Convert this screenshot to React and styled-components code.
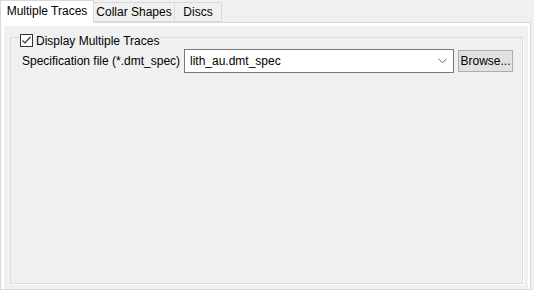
import styled, { createGlobalStyle } from 'styled-components';

const GlobalStyle = createGlobalStyle`
  html, body {
    margin: 0;
    padding: 0;
    background: #f0f0f0;
  }
  body {
    font-family: "Liberation Sans", Arial, sans-serif;
    font-size: 12px;
    color: #000;
  }
`;

const Window = styled.div`
  display: flex;
  flex-direction: column;
  width: 534px;
  height: 290px;
  overflow: hidden;
`;

const TabStrip = styled.div`
  display: flex;
  align-items: flex-end;
  height: 22px;
  position: relative;
  z-index: 1;
`;

const Tab = styled.div`
  display: flex;
  align-items: center;
  justify-content: center;
  box-sizing: border-box;
  width: ${p => p.$w}px;
  height: ${p => (p.$active ? 23 : 20)}px;
  margin-bottom: ${p => (p.$active ? -1 : 0)}px;
  padding-bottom: ${p => (p.$active ? 2 : 0)}px;
  background: ${p => (p.$active ? '#fff' : '#f0f0f0')};
  border: 1px solid #d9d9d9;
  border-bottom: ${p => (p.$active ? 'none' : '1px solid #d9d9d9')};
  margin-left: ${p => (p.$first ? 0 : -1)}px;
  white-space: nowrap;
`;

const TabPanel = styled.div`
  flex: 1;
  box-sizing: border-box;
  margin-right: 3px;
  height: 267px;
  border: 1px solid #d9d9d9;
  background: #fff;
  padding: 3px 2px 0 3px;
  display: flex;
`;

const TabPage = styled.div`
  flex: 1;
  background: #f0f0f0;
  padding: 6px 5px 0 6px;
  display: flex;
`;

const GroupBox = styled.fieldset`
  flex: 1;
  margin: 0;
  padding: 0 0 0 11px;
  height: 252px;
  box-sizing: border-box;
  border: 1px solid #dcdcdc;
  box-shadow: 1px 1px 0 #fff;
`;

const Legend = styled.legend`
  display: flex;
  align-items: flex-start;
  gap: 3px;
  box-sizing: border-box;
  height: 11px;
  margin-left: -2px;
  padding: 2px 1px 0 0;
  line-height: 14px;
  overflow: visible;
`;

const CheckBox = styled.span`
  display: inline-flex;
  flex: none;
  width: 13px;
  height: 13px;
  box-sizing: border-box;
  border: 1px solid #333;
  background: #fff;
  align-items: center;
  justify-content: center;
`;

const Row = styled.div`
  display: flex;
  align-items: center;
  margin-top: 6px;
`;

const Label = styled.span`
  width: 162px;
  white-space: nowrap;
`;

const Combo = styled.div`
  display: flex;
  align-items: center;
  justify-content: space-between;
  box-sizing: border-box;
  width: 270px;
  height: 24px;
  border: 1px solid #7a7a7a;
  background: #fff;
  padding: 0 6px 0 5px;
`;

const Button = styled.button`
  box-sizing: border-box;
  margin-left: 4px;
  width: 55px;
  height: 22px;
  padding: 0;
  font: inherit;
  color: #000;
  background: #e1e1e1;
  border: 1px solid #adadad;
`;

const Check = () => (
  <svg width="11" height="11" viewBox="0 0 11 11">
    <path d="M1.5 5.5 L4 8 L9.5 2" fill="none" stroke="#333" strokeWidth="1.2" />
  </svg>
);

const Chevron = () => (
  <svg width="9" height="6" viewBox="0 0 9 6">
    <path d="M0.5 0.8 L4.5 4.8 L8.5 0.8" fill="none" stroke="#606060" strokeWidth="1" />
  </svg>
);

export default function App() {
  return (
    <Window>
      <GlobalStyle />
      <TabStrip>
        <Tab $active $first $w={94}>Multiple Traces</Tab>
        <Tab $w={82}>Collar Shapes</Tab>
        <Tab $w={48}>Discs</Tab>
      </TabStrip>
      <TabPanel>
        <TabPage>
          <GroupBox>
            <Legend>
              <CheckBox><Check /></CheckBox>
              Display Multiple Traces
            </Legend>
            <Row>
              <Label>Specification file (*.dmt_spec)</Label>
              <Combo>
                <span>lith_au.dmt_spec</span>
                <Chevron />
              </Combo>
              <Button>Browse...</Button>
            </Row>
          </GroupBox>
        </TabPage>
      </TabPanel>
    </Window>
  );
}
